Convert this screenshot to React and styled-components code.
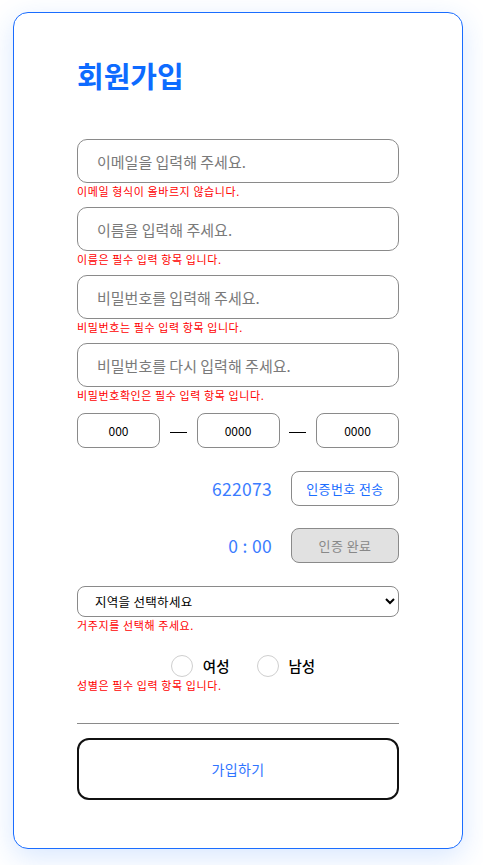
import React from "react";
import styled, { createGlobalStyle } from "styled-components";

const Global = createGlobalStyle`
  html, body { margin: 0; padding: 0; background: #fff; }
  body { font-family: "Noto Sans CJK KR", "Noto Sans", sans-serif; }
  * { box-sizing: border-box; }
`;

const Card = styled.div`
  margin: 12px 0 16px 13px;
  width: 450px;
  border: 1px solid #1a6dff;
  border-radius: 15px;
  background: #fff;
  box-shadow: 0 8px 28px rgba(40, 120, 255, 0.18);
  padding: 44px 63px 48px 63px;
`;

const Title = styled.h1`
  margin: 0 0 46px 0;
  font-size: 29px;
  line-height: 36px;
  font-weight: 700;
  color: #0d6bff;
`;

const Field = styled.div`
  display: flex;
  flex-direction: column;
  margin-bottom: ${(p) => p.$mb ?? 9}px;
`;

const TextInput = styled.input`
  width: 100%;
  height: 44px;
  border: 1px solid #8a8a8a;
  border-radius: 10px;
  padding: 0 19px;
  font-family: inherit;
  font-size: 15px;
  color: #222;
  outline: none;
  &::placeholder { color: #7a7a7a; }
`;

const Error = styled.span`
  display: block;
  margin-top: 1px;
  font-size: 11px;
  line-height: 14px;
  letter-spacing: 0.6px;
  color: #ff0000;
`;

const PhoneRow = styled.div`
  display: flex;
  align-items: center;
  justify-content: space-between;
  margin-bottom: 23px;
`;

const PhoneInput = styled.input`
  width: 83px;
  height: 35px;
  border: 1px solid #8a8a8a;
  border-radius: 8px;
  text-align: center;
  font-family: inherit;
  font-size: 12px;
  color: #000;
  outline: none;
`;

const Dash = styled.span`
  width: 17px;
  height: 1px;
  background: #000;
  margin-top: 4px;
`;

const AuthRow = styled.div`
  display: flex;
  align-items: center;
  justify-content: flex-end;
  gap: 19px;
  margin-bottom: ${(p) => p.$mb}px;
`;

const AuthValue = styled.span`
  font-size: 17.5px;
  color: #3b7cff;
  letter-spacing: 0.3px;
`;

const AuthButton = styled.button`
  width: 108px;
  height: 35px;
  border: 1px solid #8a8a8a;
  border-radius: 8px;
  background: ${(p) => (p.$disabled ? "#e1e1e1" : "#fff")};
  color: ${(p) => (p.$disabled ? "#888" : "#1a6dff")};
  font-family: inherit;
  font-size: 13px;
  letter-spacing: 0.4px;
  padding: 0;
`;

const Select = styled.select`
  width: 100%;
  height: 31px;
  border: 1px solid #8a8a8a;
  border-radius: 8px;
  padding: 0 10px 0 13px;
  font-family: inherit;
  font-size: 12.5px;
  letter-spacing: 0.3px;
  color: #000;
  background: #fff;
  outline: none;
`;

const RadioRow = styled.div`
  display: flex;
  justify-content: center;
  align-items: center;
  gap: 27px;
  height: 22px;
  margin-top: 23px;
  padding-left: 10px;
`;

const RadioLabel = styled.label`
  display: flex;
  align-items: center;
  gap: 10px;
  font-size: 14.5px;
  line-height: 22px;
  font-weight: 500;
  color: #000;
`;

const Radio = styled.input`
  appearance: none;
  width: 22px;
  height: 22px;
  margin: 0;
  border: 1px solid #cfcfcf;
  border-radius: 50%;
  background: #fff;
`;

const Divider = styled.hr`
  margin: 31px 0 14px;
  border: none;
  border-top: 1px solid #8a8a8a;
`;

const Submit = styled.button`
  display: block;
  width: 100%;
  height: 62px;
  border: 2px solid #111;
  border-radius: 12px;
  background: #fff;
  color: #2f74ff;
  font-family: inherit;
  font-size: 14px;
  letter-spacing: 0.4px;
`;

export default function App() {
  return (
    <>
      <Global />
      <Card>
        <Title>회원가입</Title>
        <Field>
          <TextInput placeholder="이메일을 입력해 주세요." />
          <Error>이메일 형식이 올바르지 않습니다.</Error>
        </Field>
        <Field>
          <TextInput placeholder="이름을 입력해 주세요." />
          <Error>이름은 필수 입력 항목 입니다.</Error>
        </Field>
        <Field>
          <TextInput type="password" placeholder="비밀번호를 입력해 주세요." />
          <Error>비밀번호는 필수 입력 항목 입니다.</Error>
        </Field>
        <Field $mb={11}>
          <TextInput type="password" placeholder="비밀번호를 다시 입력해 주세요." />
          <Error>비밀번호확인은 필수 입력 항목 입니다.</Error>
        </Field>
        <PhoneRow>
          <PhoneInput defaultValue="000" />
          <Dash />
          <PhoneInput defaultValue="0000" />
          <Dash />
          <PhoneInput defaultValue="0000" />
        </PhoneRow>
        <AuthRow $mb={22}>
          <AuthValue>622073</AuthValue>
          <AuthButton>인증번호 전송</AuthButton>
        </AuthRow>
        <AuthRow $mb={23}>
          <AuthValue>0 : 00</AuthValue>
          <AuthButton $disabled>인증 완료</AuthButton>
        </AuthRow>
        <Field $mb={0}>
          <Select defaultValue="">
            <option value="">지역을 선택하세요</option>
            <option value="seoul">서울</option>
            <option value="busan">부산</option>
          </Select>
          <Error>거주지를 선택해 주세요.</Error>
        </Field>
        <RadioRow>
          <RadioLabel>
            <Radio type="radio" name="gender" value="f" />
            여성
          </RadioLabel>
          <RadioLabel>
            <Radio type="radio" name="gender" value="m" />
            남성
          </RadioLabel>
        </RadioRow>
        <Error>성별은 필수 입력 항목 입니다.</Error>
        <Divider />
        <Submit>가입하기</Submit>
      </Card>
    </>
  );
}
